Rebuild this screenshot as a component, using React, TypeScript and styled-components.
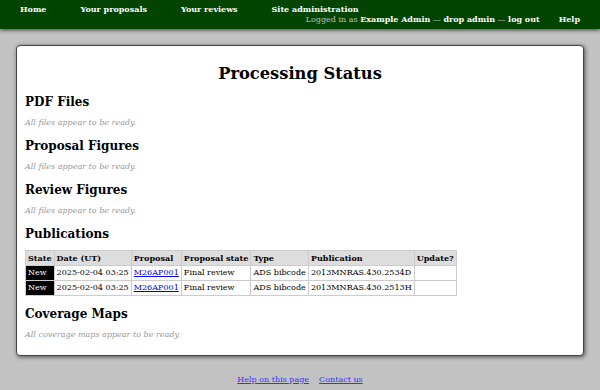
import styled, { createGlobalStyle } from "styled-components";

type Publication = {
  state: string;
  date: string;
  proposal: string;
  proposalState: string;
  type: string;
  publication: string;
};

const publications: Publication[] = [
  {
    state: "New",
    date: "2025-02-04 03:25",
    proposal: "M26AP001",
    proposalState: "Final review",
    type: "ADS bibcode",
    publication: "2013MNRAS.430.2534D",
  },
  {
    state: "New",
    date: "2025-02-04 03:25",
    proposal: "M26AP001",
    proposalState: "Final review",
    type: "ADS bibcode",
    publication: "2013MNRAS.430.2513H",
  },
];

const sections = [
  { title: "PDF Files", note: "All files appear to be ready." },
  { title: "Proposal Figures", note: "All files appear to be ready." },
  { title: "Review Figures", note: "All files appear to be ready." },
];

const App = () => {
  return (
    <>
      <GlobalStyle />
      <Header>
        <NavLink href="#">Home</NavLink>
        <NavLink href="#">Your proposals</NavLink>
        <NavLink href="#">Your reviews</NavLink>
        <NavLink href="#">Site administration</NavLink>
        <RightGroup>
          <LoggedIn>
            Logged in as <strong>Example Admin</strong> &mdash;{" "}
            <strong>drop admin</strong> &mdash; <strong>log out</strong>
          </LoggedIn>
          <NavLink href="#">Help</NavLink>
        </RightGroup>
      </Header>

      <Panel>
        <Title>Processing Status</Title>

        {sections.map((s) => (
          <div key={s.title}>
            <SectionTitle>{s.title}</SectionTitle>
            <Note>{s.note}</Note>
          </div>
        ))}

        <SectionTitle>Publications</SectionTitle>
        <Table>
          <thead>
            <tr>
              <th>State</th>
              <th>Date (UT)</th>
              <th>Proposal</th>
              <th>Proposal state</th>
              <th>Type</th>
              <th>Publication</th>
              <th>Update?</th>
            </tr>
          </thead>
          <tbody>
            {publications.map((p) => (
              <tr key={p.publication}>
                <StateCell>{p.state}</StateCell>
                <td>{p.date}</td>
                <td>
                  <a href="#">{p.proposal}</a>
                </td>
                <td>{p.proposalState}</td>
                <td>{p.type}</td>
                <td>{p.publication}</td>
                <td></td>
              </tr>
            ))}
          </tbody>
        </Table>

        <SectionTitle>Coverage Maps</SectionTitle>
        <Note>All coverage maps appear to be ready.</Note>
      </Panel>

      <Footer>
        <FooterLink href="#">Help on this page</FooterLink>
        <FooterLink href="#">Contact us</FooterLink>
      </Footer>
    </>
  );
};

const GlobalStyle = createGlobalStyle`
  html, body {
    margin: 0;
    padding: 0;
    background: #c2c2c2;
    font-family: "DejaVu Serif", serif;
    font-size: 8px;
    color: #000;
  }
`;

const Header = styled.div`
  display: flex;
  flex-wrap: wrap;
  align-items: center;
  column-gap: 34px;
  padding: 4px 20px;
  background: #004400;
  line-height: 10px;
  box-shadow: 0 1px 4px rgba(0, 0, 0, 0.7);
`;

const NavLink = styled.a`
  color: #fff;
  font-weight: bold;
  text-decoration: none;
`;

const RightGroup = styled.div`
  display: flex;
  gap: 19px;
  margin-left: auto;
`;

const LoggedIn = styled.span`
  color: #c0c0c0;

  strong {
    color: #fff;
  }
`;

const Panel = styled.div`
  margin: 16px 16px 0;
  padding: 8px 8px 15px;
  background: #fff;
  border: 1px solid #444;
  border-radius: 4px;
  box-shadow: 1px 1px 4px rgba(0, 0, 0, 0.6);
`;

const Title = styled.h1`
  margin: 10px 0 0;
  font-size: 16.3px;
  line-height: 20px;
  text-align: center;
`;

const SectionTitle = styled.h2`
  margin: 11px 0 0;
  font-size: 12px;
  line-height: 14px;
`;

const Note = styled.p`
  margin: 9px 0 0;
  line-height: 10px;
  font-style: italic;
  color: #999;
`;

const Table = styled.table`
  margin-top: 9px;
  border-collapse: collapse;
  font-size: 8.05px;
  line-height: 10px;

  th,
  td {
    border: 1px solid #ccc;
    padding: 2px;
    text-align: left;
    white-space: nowrap;
  }

  th {
    background: #ddd;
    font-weight: bold;
  }

  a {
    color: #00e;
  }
`;

const StateCell = styled.td`
  && {
    background: #000;
    color: #fff;
  }
`;

const Footer = styled.div`
  display: flex;
  justify-content: center;
  gap: 10px;
  padding: 19px 0;
  line-height: 10px;
`;

const FooterLink = styled.a`
  color: #33f;
`;

export default App;
